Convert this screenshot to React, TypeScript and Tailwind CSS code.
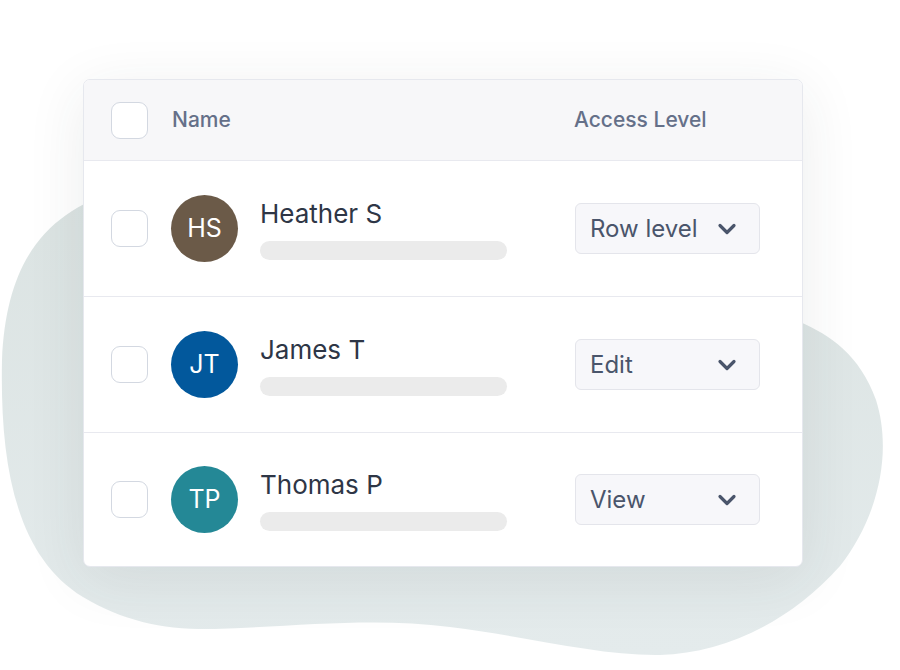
import React from "react";

type Member = {
  initials: string;
  name: string;
  color: string;
  access: string;
};

const members: Member[] = [
  { initials: "HS", name: "Heather S", color: "bg-[#6b5a48]", access: "Row level" },
  { initials: "JT", name: "James T", color: "bg-[#02589c]", access: "Edit" },
  { initials: "TP", name: "Thomas P", color: "bg-[#248896]", access: "View" },
];

function Checkbox() {
  return (
    <div className="h-[37px] w-[37px] shrink-0 rounded-[9px] border-[1.5px] border-[#d3d8e1] bg-white" />
  );
}

function Chevron() {
  return (
    <svg width="20" height="14" viewBox="0 0 20 14" fill="none">
      <path
        d="M3 3.5 L10 10.5 L17 3.5"
        stroke="#4a556b"
        strokeWidth="3.2"
        strokeLinecap="round"
        strokeLinejoin="round"
      />
    </svg>
  );
}

function Blob() {
  return (
    <svg
      className="absolute left-0 top-0"
      width="900"
      height="670"
      viewBox="0 0 900 670"
    >
      <defs>
        <linearGradient id="blobFill" x1="0" y1="0" x2="0" y2="1">
          <stop offset="0%" stopColor="#dbe3e2" />
          <stop offset="100%" stopColor="#e4ebec" />
        </linearGradient>
      </defs>
      <path
        d="M120 190 C45 212 6 262 2 360 C0 460 14 555 83 597 C125 622 165 630 215 629 C300 626 375 617 450 627 C530 637 600 656 660 655 C725 653 790 622 840 566 C880 515 892 450 876 400 C860 355 830 335 800 322 L700 230 L300 180 Z"
        fill="url(#blobFill)"
      />
    </svg>
  );
}

export default function App() {
  return (
    <div
      className="relative h-[670px] w-[900px] overflow-hidden bg-white"
      style={{ fontFamily: "Inter, Roboto, 'Liberation Sans', sans-serif" }}
    >
      <Blob />
      <div className="relative ml-[83px] mt-[79px] w-[720px] overflow-hidden rounded-[7px] border border-[#e6e8ee] bg-white shadow-[0_12px_60px_rgba(40,60,50,0.09)]">
        {/* Header */}
        <div className="flex h-[81px] items-center border-b border-[#e8e9ef] bg-[#f7f7f9] pl-[27px]">
          <Checkbox />
          <div className="ml-[24px] w-[402px] text-[21px] font-medium text-[#657089]">
            Name
          </div>
          <div className="text-[21px] font-medium text-[#657089]">Access Level</div>
        </div>

        {/* Rows */}
        {members.map((m, i) => (
          <div
            key={m.initials}
            className={`flex items-center pl-[27px] ${
              i < members.length - 1 ? "h-[136px] border-b border-[#e8e9ef]" : "h-[133px]"
            }`}
          >
            <Checkbox />
            <div
              className={`ml-[23px] flex h-[67px] w-[67px] shrink-0 items-center justify-center rounded-full text-[25px] text-white ${m.color}`}
            >
              {m.initials}
            </div>
            <div className="ml-[22px] flex w-[247px] flex-col pt-[2px]">
              <div className="text-[26px] leading-[30px] text-[#2e3646]">{m.name}</div>
              <div className="mt-[12px] h-[19px] w-[247px] rounded-full bg-[#ebebeb]" />
            </div>
            <div className="ml-[68px] flex h-[51px] w-[185px] items-center justify-between rounded-[6px] border border-[#e4e5eb] bg-[#f7f7fa] pl-[14px] pr-[22px]">
              <span className="text-[24px] text-[#4a556b]">{m.access}</span>
              <Chevron />
            </div>
          </div>
        ))}
      </div>
    </div>
  );
}
